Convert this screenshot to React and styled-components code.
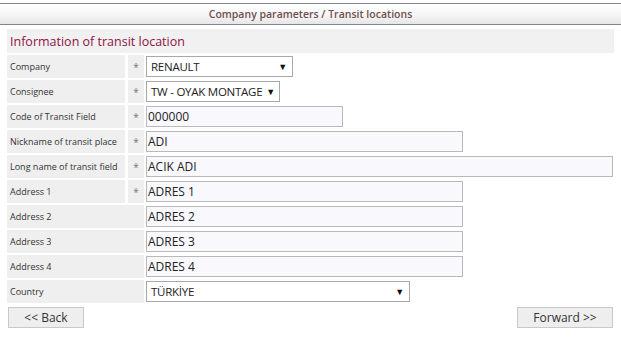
import React from 'react'
import styled, { createGlobalStyle } from 'styled-components'

const GlobalStyle = createGlobalStyle`
  html, body {
    margin: 0;
    padding: 0;
    background: #ffffff;
    font-family: "Open Sans", "Liberation Sans", sans-serif;
  }
`;

const Page = styled.div`
  width: 621px;
  height: 340px;
  padding-top: 3px;
  box-sizing: border-box;
`;

const TitleBar = styled.div`
  height: 20px;
  border-top: 1px solid #7d8791;
  border-bottom: 1px solid #7d8791;
  background: linear-gradient(#ffffff, #f4f4f4 60%, #e6e6e6);
  display: flex;
  align-items: center;
  justify-content: center;
  font-size: 10.5px;
  font-weight: 600;
  color: #6f4f4f;
`;

const Panel = styled.div`
  margin: 4px 7px 0 7px;
`;

const SectionHead = styled.div`
  height: 24px;
  background: #f1f1f1;
  display: flex;
  align-items: center;
  padding-left: 3px;
  font-size: 12.5px;
  color: #8e1344;
  margin-bottom: 2px;
`;

const Row = styled.div`
  display: grid;
  grid-template-columns: 118px 16px 1fr;
  column-gap: 3px;
  height: 23px;
  margin-bottom: 2px;
`;

const Label = styled.div`
  background: #efefef;
  display: flex;
  align-items: center;
  padding-left: 3px;
  font-size: 9px;
  color: #333;
  grid-column: ${p => (p.$wide ? '1 / 3' : 'auto')};
`;

const Star = styled.div`
  background: #efefef;
  display: flex;
  align-items: center;
  justify-content: center;
  font-size: 10px;
  color: #777;
`;

const Field = styled.div`
  display: flex;
  align-items: center;
  margin-left: -1px;
`;

const TextBox = styled.div`
  width: ${p => p.$w}px;
  height: 21px;
  box-sizing: border-box;
  border: 1px solid #b9b9b9;
  background: #f8f8fd;
  display: flex;
  align-items: center;
  padding-left: 1px;
  font-size: 12px;
  color: #222;
  white-space: nowrap;
  overflow: hidden;
`;

const Select = styled(TextBox)`
  background: #ffffff;
  border-color: #a8a8a8;
  justify-content: space-between;
  padding: 0 5px 0 4px;
  font-size: 11.5px;
  letter-spacing: -0.25px;
`;

const Arrow = styled.span`
  font-size: 9px;
  color: #111;
  margin-left: 4px;
`;

const Buttons = styled.div`
  display: flex;
  justify-content: space-between;
  padding: 2px 1px 0 1px;
`;

const Button = styled.div`
  width: ${p => p.$w}px;
  height: 21px;
  box-sizing: border-box;
  border: 1px solid #c9c9c9;
  background: #eeeeee;
  display: flex;
  align-items: center;
  justify-content: center;
  font-size: 12px;
  color: #333;
`;

const rows = [
  { label: 'Company', req: true, type: 'select', value: 'RENAULT', w: 147 },
  { label: 'Consignee', req: true, type: 'select', value: 'TW - OYAK MONTAGE', w: 134 },
  { label: 'Code of Transit Field', req: true, value: '000000', w: 197 },
  { label: 'Nickname of transit place', req: true, value: 'ADI', w: 317 },
  { label: 'Long name of transit field', req: true, value: 'ACIK ADI', w: 467 },
  { label: 'Address 1', req: true, value: 'ADRES 1', w: 317 },
  { label: 'Address 2', value: 'ADRES 2', w: 317 },
  { label: 'Address 3', value: 'ADRES 3', w: 317 },
  { label: 'Address 4', value: 'ADRES 4', w: 317 },
  { label: 'Country', type: 'select', value: 'TÜRKİYE', w: 264 },
];

const App = () => {
  return (
    <>
      <GlobalStyle />
      <Page>
        <TitleBar>Company parameters / Transit locations</TitleBar>
        <Panel>
          <SectionHead>Information of transit location</SectionHead>
          {rows.map(r => (
            <Row key={r.label}>
              <Label $wide={!r.req}>{r.label}</Label>
              {r.req && <Star>*</Star>}
              <Field>
                {r.type === 'select' ? (
                  <Select $w={r.w}>
                    {r.value}
                    <Arrow>▼</Arrow>
                  </Select>
                ) : (
                  <TextBox $w={r.w}>{r.value}</TextBox>
                )}
              </Field>
            </Row>
          ))}
          <Buttons>
            <Button $w={76}>&lt;&lt; Back</Button>
            <Button $w={96}>Forward &gt;&gt;</Button>
          </Buttons>
        </Panel>
      </Page>
    </>
  );
}

export default App
